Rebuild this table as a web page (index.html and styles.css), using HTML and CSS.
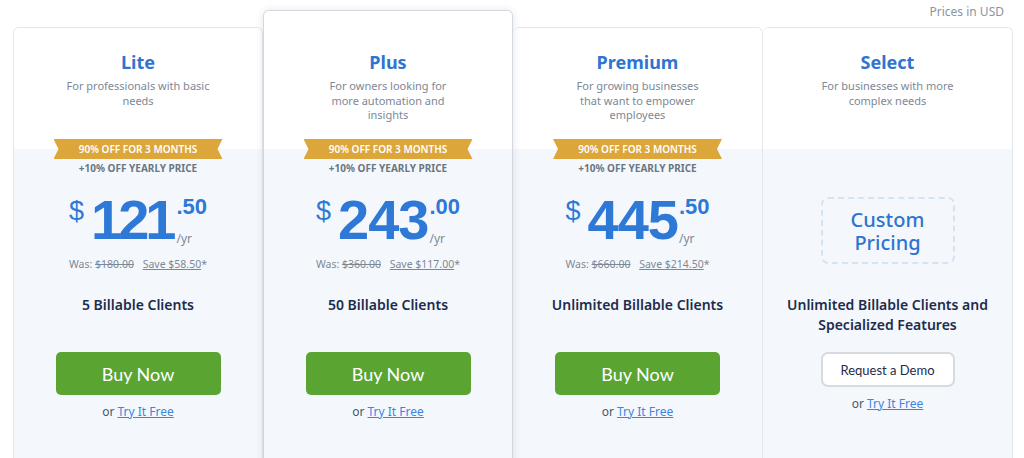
FILE: index.html
```html
<!DOCTYPE html>
<html>
<head>
<meta charset="utf-8">
<link rel="stylesheet" href="styles.css">
</head>
<body>
<div class="page">
  <div class="currency">Prices in USD</div>
  <div class="plans">
    <div class="card">
      <div class="head">
        <div class="title">Lite</div>
        <div class="desc">For professionals with basic<br>needs</div>
      </div>
      <div class="body">
        <div class="ribbon">90% OFF FOR 3 MONTHS</div>
        <div class="extra">+10% OFF YEARLY PRICE</div>
        <div class="price">
          <span class="cur">$</span>
          <span class="amount narrow">121</span>
          <span class="tail"><span class="cents">.50</span><span class="per">/yr</span></span>
        </div>
        <div class="was">Was: <s>$180.00</s> <u>Save $58.50</u>*</div>
        <div class="clients">5 Billable Clients</div>
        <button class="buy">Buy Now</button>
        <div class="try">or <a href="#">Try It Free</a></div>
      </div>
    </div>
    <div class="card featured">
      <div class="head">
        <div class="title">Plus</div>
        <div class="desc">For owners looking for<br>more automation and<br>insights</div>
      </div>
      <div class="body">
        <div class="ribbon">90% OFF FOR 3 MONTHS</div>
        <div class="extra">+10% OFF YEARLY PRICE</div>
        <div class="price">
          <span class="cur">$</span>
          <span class="amount">243</span>
          <span class="tail"><span class="cents">.00</span><span class="per">/yr</span></span>
        </div>
        <div class="was">Was: <s>$360.00</s> <u>Save $117.00</u>*</div>
        <div class="clients">50 Billable Clients</div>
        <button class="buy">Buy Now</button>
        <div class="try">or <a href="#">Try It Free</a></div>
      </div>
    </div>
    <div class="card">
      <div class="head">
        <div class="title">Premium</div>
        <div class="desc">For growing businesses<br>that want to empower<br>employees</div>
      </div>
      <div class="body">
        <div class="ribbon">90% OFF FOR 3 MONTHS</div>
        <div class="extra">+10% OFF YEARLY PRICE</div>
        <div class="price">
          <span class="cur">$</span>
          <span class="amount">445</span>
          <span class="tail"><span class="cents">.50</span><span class="per">/yr</span></span>
        </div>
        <div class="was">Was: <s>$660.00</s> <u>Save $214.50</u>*</div>
        <div class="clients">Unlimited Billable Clients</div>
        <button class="buy">Buy Now</button>
        <div class="try">or <a href="#">Try It Free</a></div>
      </div>
    </div>
    <div class="card">
      <div class="head">
        <div class="title">Select</div>
        <div class="desc">For businesses with more<br>complex needs</div>
      </div>
      <div class="body">
        <div class="custom"><span class="custom-line">Custom</span><span class="custom-line">Pricing</span></div>
        <div class="clients select-clients">Unlimited Billable Clients and<br>Specialized Features</div>
        <button class="demo">Request a Demo</button>
        <div class="try try-select">or <a href="#">Try It Free</a></div>
      </div>
    </div>
  </div>
</div>
</body>
</html>
```

FILE: styles.css
```css
html, body {
  margin: 0;
  padding: 0;
  background: #ffffff;
  overflow: hidden;
}

.page {
  width: 1024px;
  height: 458px;
  font-family: "Noto Sans", "Open Sans", sans-serif;
  color: #1d2c4c;
  position: relative;
}

.currency {
  position: absolute;
  top: 3px;
  right: 20px;
  font-size: 12px;
  color: #8a95a3;
}

.plans {
  display: flex;
  align-items: flex-start;
  padding: 27px 0 0 13px;
}

.card {
  width: 250px;
  box-sizing: border-box;
  border: 1px solid #e3e7eb;
  border-bottom: none;
  border-radius: 6px 6px 0 0;
  background: #f4f8fd;
  height: 440px;
  overflow: hidden;
}

.card + .card {
  border-left: none;
}

.card.featured {
  margin-top: -17px;
  height: 460px;
  border: 1px solid #d3d8de;
  border-bottom: none;
  box-shadow: 0 0 8px rgba(40, 60, 90, 0.12);
  position: relative;
  z-index: 1;
}

.card.featured + .card {
  border-left: none;
}

.head {
  height: 121px;
  background: #ffffff;
  box-sizing: border-box;
  padding-top: 22px;
  text-align: center;
}

.featured .head {
  height: 138px;
  padding-top: 39px;
}

.title {
  font-size: 18px;
  line-height: 24px;
  font-weight: 700;
  color: #2f74d0;
}

.desc {
  margin-top: 5px;
  font-size: 11px;
  line-height: 14.5px;
  color: #7d8896;
}

.body {
  text-align: center;
  display: flex;
  flex-direction: column;
  align-items: center;
}

.ribbon {
  margin-top: -10px;
  width: 169px;
  height: 20px;
  line-height: 20px;
  background: #dca63a;
  color: #ffffff;
  font-size: 10px;
  font-weight: 600;
  clip-path: polygon(0 0, 100% 0, calc(100% - 5px) 50%, 100% 100%, 0 100%, 5px 50%);
}

.extra {
  margin-top: 3px;
  font-size: 10px;
  line-height: 12px;
  font-weight: 700;
  color: #6b7683;
}

.price {
  display: flex;
  align-items: flex-start;
  justify-content: center;
  margin-top: 20px;
  height: 56px;
  color: #2e78d6;
  font-family: "Liberation Sans", Arial, sans-serif;
}

.cur {
  font-size: 27px;
  line-height: 30px;
  margin-top: 2px;
  margin-right: 7px;
}

.amount {
  font-size: 56px;
  line-height: 56px;
  font-weight: 700;
  letter-spacing: -1px;
  margin-top: -2px;
}

.amount.narrow {
  letter-spacing: -4px;
  margin-right: 3px;
}

.tail {
  display: flex;
  flex-direction: column;
  align-items: flex-start;
  margin-left: 1px;
}

.cents {
  font-size: 22px;
  line-height: 22px;
  font-weight: 700;
  margin-top: 2px;
}

.per {
  margin-top: 14px;
  font-size: 12px;
  line-height: 14px;
  color: #7d8896;
  font-family: "Noto Sans", sans-serif;
}

.was {
  margin-top: 7px;
  font-size: 10.5px;
  line-height: 14px;
  color: #7d8896;
}

.was s {
  margin-right: 6px;
}

.clients {
  margin-top: 24px;
  font-size: 14px;
  line-height: 20px;
  font-weight: 600;
  color: #1d2c4c;
}

.buy {
  margin-top: 37px;
  width: 165px;
  height: 43px;
  border: none;
  border-radius: 5px;
  background: #5aa532;
  color: #ffffff;
  font-family: "Lato", sans-serif;
  font-size: 18px;
}

.try {
  margin-top: 9px;
  font-size: 12px;
  line-height: 16px;
  color: #4a5566;
}

.try a {
  color: #3c86e0;
}

.custom {
  margin-top: 48px;
  width: 134px;
  height: 67px;
  box-sizing: border-box;
  border: 2px dashed #d3e4f6;
  border-radius: 7px;
  color: #2f74d0;
  font-size: 20px;
  font-weight: 500;
  padding-top: 9px;
  display: flex;
  flex-direction: column;
  align-items: center;
}

.custom-line {
  display: block;
  line-height: 23px;
  height: 23px;
}

.select-clients {
  margin-top: 31px;
}

.demo {
  margin-top: 17px;
  width: 134px;
  height: 35px;
  background: #ffffff;
  border: 2px solid #d7dadf;
  border-radius: 7px;
  font-family: "Lato", sans-serif;
  font-size: 13px;
  color: #1d2c4c;
}

.try-select {
  margin-top: 9px;
}
```
